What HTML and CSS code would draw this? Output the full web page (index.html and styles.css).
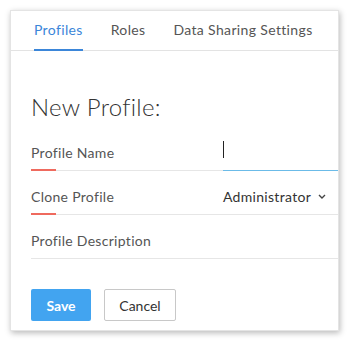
FILE: index.html
```html
<!DOCTYPE html>
<html lang="en">

<head>
    <meta charset="UTF-8">
    <meta name="viewport" content="width=device-width, initial-scale=1.0">
    <title>New Profile</title>
    <link rel="stylesheet" href="styles.css">
</head>

<body>

    <div class="card">
        <div class="tabs">
            <div class="tab active">Profiles</div>
            <div class="tab">Roles</div>
            <div class="tab">Data Sharing Settings</div>
        </div>

        <div class="form">
            <h1>New Profile:</h1>

            <div class="row">
                <div class="label required">Profile Name</div>
                <div class="field focused"><span class="caret"></span></div>
            </div>

            <div class="row">
                <div class="label required">Clone Profile</div>
                <div class="field select">
                    <span>Administrator</span>
                    <svg width="8" height="5" viewBox="0 0 8 5">
                        <path d="M1 1 L4 4 L7 1" fill="none" stroke="#444" stroke-width="1.4" />
                    </svg>
                </div>
            </div>

            <div class="row">
                <div class="label">Profile Description</div>
                <div class="field"></div>
            </div>

            <div class="actions">
                <button class="btn btn-save">Save</button>
                <button class="btn btn-cancel">Cancel</button>
            </div>
        </div>
    </div>

</body>

</html>
```

FILE: styles.css
```css
html,
body {
    margin: 0;
    height: 100%;
    background-color: #fff;
}

body {
    padding: 10px 0 0 10px;
    box-sizing: border-box;
    font-family: Lato, "Open Sans", sans-serif;
    color: #555;
}

.card {
    width: 329px;
    height: 321px;
    background-color: #fff;
    border: 1px solid #e4e4e4;
    box-shadow: 1px 2px 6px rgba(0, 0, 0, 0.28);
    box-sizing: border-box;
}

.tabs {
    display: flex;
    gap: 28px;
    padding-left: 23px;
    height: 40px;
    border-bottom: 1px solid #e3e3e3;
    box-sizing: border-box;
}

.tab {
    font-size: 14px;
    letter-spacing: 0.35px;
    line-height: 38px;
    color: #555;
    height: 40px;
    box-sizing: border-box;
}

.tab.active {
    color: #3b86d9;
    border-bottom: 2px solid #3b86d9;
}

.form {
    padding: 0 0 0 20px;
}

h1 {
    font-size: 24px;
    font-weight: 300;
    letter-spacing: 0.3px;
    color: #333;
    margin: 41px 0 5px 0;
    line-height: 30px;
}

.row {
    display: flex;
    height: 44px;
    border-bottom: 1px solid #e6e6e6;
    box-sizing: border-box;
}

.label {
    width: 192px;
    font-size: 14px;
    letter-spacing: 0.3px;
    color: #555;
    display: flex;
    align-items: flex-end;
    padding-bottom: 9px;
    box-sizing: border-box;
    position: relative;
}

/* red mark under required labels */
.label.required::after {
    content: "";
    position: absolute;
    left: 0;
    bottom: -1px;
    width: 25px;
    height: 2px;
    background-color: #ef6a5e;
}

.field {
    flex: 1;
    display: flex;
    align-items: center;
    font-size: 14px;
    letter-spacing: 0.3px;
    color: #333;
}

.field.focused {
    border-bottom: 1px solid #6bbbe8;
    margin-bottom: -1px;
}

.caret {
    width: 1px;
    height: 17px;
    background-color: #222;
    margin-top: 2px;
}

.select {
    justify-content: space-between;
    padding-right: 12px;
    padding-top: 8px;
}

.actions {
    display: flex;
    gap: 13px;
    margin-top: 30px;
}

.btn {
    height: 32px;
    font-family: Lato, "Open Sans", sans-serif;
    font-size: 14px;
    border-radius: 2px;
    cursor: pointer;
}

.btn-save {
    width: 60px;
    background-color: #42a4f0;
    border: none;
    color: #fff;
    font-weight: bold;
}

.btn-cancel {
    width: 72px;
    background-color: #fff;
    border: 1px solid #c8c8c8;
    color: #333;
}
```
